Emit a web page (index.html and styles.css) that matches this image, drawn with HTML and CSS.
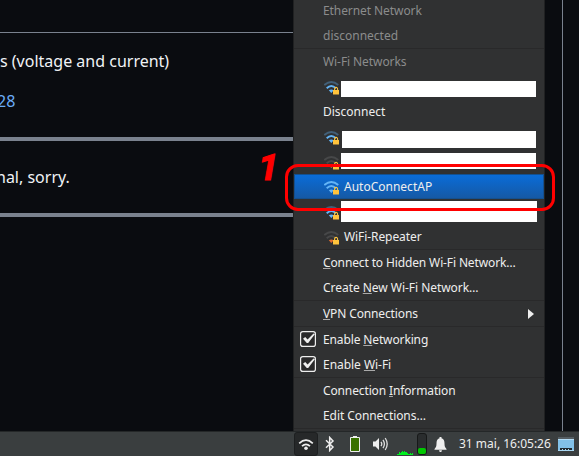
FILE: index.html
```html
<!DOCTYPE html>
<html lang="en">
<head>
<meta charset="utf-8">
<title>Network menu</title>
<link rel="stylesheet" href="styles.css">
</head>
<body>
<svg width="0" height="0" class="defs">
  <symbol id="waves" viewBox="0 0 16 14">
    <path class="w3" d="M.3 4Q7.300-2 14.300 4" fill="none" stroke-width="1.800"/>
    <path class="w2" d="M2.700 7.300Q7.300 2.900 11.900 7.300" fill="none" stroke-width="1.900"/>
    <path class="w1" d="M4.800 9.300Q7.300 7.500 9.800 9.300L7.300 12Z"/>
    <path d="M10.600 9V7.900a1.500 1.500 0 0 1 3 0V9" fill="none" stroke="#ffc33c" stroke-width="1.100"/>
    <path d="M9 9H15V13.500H9z" fill="#ffc33c"/>
  </symbol>
</svg>
<div class="screen">
  <main class="page">
    <section class="post">
      <p class="post-text">s (voltage and current)</p>
      <p class="post-text"><a class="link">28</a></p>
    </section>
    <section class="reply"><p class="post-text"><span class="cut">nal, sorry.</span></p></section>
    <section class="rest"></section>
  </main>
  <footer class="taskbar">
    <div class="tray-wifi">
      <svg width="16" height="14" viewBox="0 0 16 14" fill="none" stroke="#eee" stroke-width="1.7"><path d="M1.200 6.300Q8 0 14.800 6.300M4 9.200Q8 5.400 12 9.200"/><circle cx="8" cy="11.300" r="1.800" fill="#eee" stroke="none"/></svg>
    </div>
    <svg class="tray-bt" width="10" height="16" viewBox="0 0 10 16" fill="none" stroke="#eee" stroke-width="1.5"><path d="M1 4.3L8 11 4.7 14.5V1.5L8 5 1 11.7"/></svg>
    <svg class="tray-bat" width="10" height="16" viewBox="0 0 10 16"><path d="M3 0h4v2H3z" fill="#eee"/><path d="M.5 1.5h9v14h-9z" fill="#397100" stroke="#eee"/></svg>
    <svg class="tray-vol" width="17" height="14" viewBox="0 0 17 14"><path d="M1 4.500h2.500L7 1v12L3.500 9.500H1z" fill="#eee"/><path d="M9 4.800Q10.500 7 9 9.200M11 2.800Q13.800 7 11 11.200M13.200 1Q17.200 7 13.200 13" fill="none" stroke="#ddd" stroke-width="1.300"/></svg>
    <svg class="tray-graph" width="16" height="4" viewBox="0 0 16 4"><path d="M0 4V3h2V1h1v1h1V1h1V0h1v1h1V0h1v1h2v1h1v1h2V2h1v1h1V2h1v2z" fill="#00f020"/></svg>
    <div class="tray-meter"><span class="meter-fill"></span></div>
    <svg class="tray-bell" width="13" height="15" viewBox="0 0 13 15" fill="#eee"><path d="M5.500 0h2v1.200C10 2 10.500 4 10.500 6.500 10.500 9.500 11 10 12.500 12v.8H.5V12C2 10 2.500 9.500 2.500 6.500 2.500 4 3 2 5.500 1.200zM5 13.300h3L7.300 15H5.700z"/></svg>
    <time class="clock">31 mai, 16:05:26</time>
    <svg class="tray-desk" width="16" height="14" viewBox="0 0 16 14"><path d="M0 0h16v2H0z" fill="#555d62"/><path d="M0 2h16v12H0z" fill="#82c1e8"/><path d="M0 2h16v1H0z" fill="#b3dcf5"/><path d="M2 11h12v2H2z" fill="#20292e"/><path d="M4 12h1v1H4zM7 12h1v1H7zM10 12h1v1h-1z" fill="#b3dcf5"/><path d="M0 13h16v1H0z" fill="#a9d7f2"/></svg>
  </footer>

  <nav class="menu">
    <div class="item muted tight">Ethernet Network</div>
    <div class="item muted">disconnected</div>
    <div class="sep"></div>
    <div class="item muted tight">Wi-Fi Networks</div>
    <div class="item"><svg class="wifi mid"><use href="#waves"/></svg><span class="redact r1"></span></div>
    <div class="item">Disconnect</div>
    <div class="item"><svg class="wifi mid"><use href="#waves"/></svg><span class="redact r2"></span></div>
    <div class="item"><svg class="wifi weak"><use href="#waves"/></svg><span class="redact r3"></span></div>
    <div class="item active"><svg class="wifi full"><use href="#waves"/></svg><span class="name">AutoConnectAP</span></div>
    <div class="item"><svg class="wifi mid"><use href="#waves"/></svg><span class="redact r4"></span></div>
    <div class="item"><svg class="wifi weak"><use href="#waves"/></svg><span class="name tight">WiFi-Repeater</span></div>
    <div class="sep"></div>
    <div class="item tighter"><span><u>C</u>onnect to Hidden Wi-Fi Network…</span></div>
    <div class="item slight"><span>Create <u>N</u>ew Wi-Fi Network…</span></div>
    <div class="sep"></div>
    <div class="item tighter"><span><u>V</u>PN Connections</span><svg class="arrow" width="6" height="10" viewBox="0 0 6 10"><path d="M0 0L6 5 0 10z" fill="#eee"/></svg></div>
    <div class="sep"></div>
    <div class="item checkable tighter"><svg class="check" viewBox="0 0 16 16"><rect x=".6" y=".6" width="14.800" height="14.800" rx="2.200" fill="#29292a" stroke="#eee" stroke-width="1.200"/><path d="M3 7.800L5.200 6 7.600 8.400 13.500 2.600 15 3 8.200 12H6.800z" fill="#eee"/></svg><span>Enable <u>N</u>etworking</span></div>
    <div class="item checkable slight"><svg class="check" viewBox="0 0 16 16"><rect x=".6" y=".6" width="14.800" height="14.800" rx="2.200" fill="#29292a" stroke="#eee" stroke-width="1.200"/><path d="M3 7.800L5.200 6 7.600 8.400 13.500 2.600 15 3 8.200 12H6.800z" fill="#eee"/></svg><span>Enable <u>W</u>i-Fi</span></div>
    <div class="sep"></div>
    <div class="item tighter"><span>Connection <u>I</u>nformation</span></div>
    <div class="item tight"><span>Edit Connections…</span></div>
    <div class="sep"></div>
  </nav>
  <div class="callout"></div>
  <div class="callout-number">1</div>
</div>
</body>
</html>
```
FILE: styles.css
```css
* { box-sizing: border-box; }
body { margin: 0; font-family: "Noto Sans", sans-serif; }
.defs { position: absolute; }
.screen { position: relative; width: 579px; height: 456px; overflow: hidden; display: flex; flex-direction: column; background: #0a0c10; }
.page { width: 563px; flex: 1; border-right: 1px solid #7a828e; display: flex; flex-direction: column; padding-top: 32px; color: #f0f3f6; font-size: 16px; line-height: 24px; }
.post { width: 530px; height: 109px; border-top: 1px solid #7a828e; border-bottom: 4px solid #7a828e; padding-top: 16px; }
.post-text { margin: 0 0 16px; white-space: nowrap; }
.link { color: #6aadf8; margin-left: -3px; }
.cut { margin-left: -4px; }
.reply { width: 530px; height: 76px; border-bottom: 4px solid #7a828e; padding-top: 24px; }
.taskbar { height: 25px; border-top: 1px solid #242728; background: #3a3e3f; display: flex; align-items: center; color: #eee; }
.tray-wifi { margin-left: 294px; width: 24px; height: 24px; display: flex; align-items: center; justify-content: center; background: #262829; border: 1px solid #1d1f20; border-radius: 3px; }
.tray-bt { margin-left: 7px; }
.tray-bat { margin-left: 15px; }
.tray-vol { margin-left: 12px; }
.tray-graph { margin-left: 8px; align-self: flex-end; margin-bottom: 1px; }
.tray-meter { margin-left: 4px; width: 10px; height: 22px; border: 1px solid #171919; border-radius: 3px; background: #2a2d2e; display: flex; align-items: flex-end; }
.meter-fill { width: 8px; height: 6px; border-radius: 2px; background: #00c800; }
.tray-bell { margin-left: 7px; }
.clock { margin-left: 12px; width: 92px; font-size: 12px; line-height: 24px; white-space: nowrap; }
.tray-desk { margin-left: 7px; }

.menu { position: absolute; left: 293px; top: -2px; width: 252px; height: 433px; background: #303132; border: solid #202122; border-width: 0 1px; color: #eee; font-size: 12px; }
.item { height: 25px; display: flex; align-items: center; padding-left: 29px; white-space: nowrap; line-height: 25px; }
.muted { color: #8b8c8c; }
.slight { letter-spacing: -.04px; }
.tight { letter-spacing: -.08px; }
.tighter { letter-spacing: -.13px; }
.sep { height: 1px; background: #29292a; }
.active { background: linear-gradient(#0a6cd8, #1559a5); border: 1px solid #14508f; padding-left: 28px; }
.wifi { width: 16px; height: 14px; flex: none; margin: 2px 0 0 1px; }
.name { margin-left: 4px; }
.mid { --outer: #426078; --middle: #64b5f6; --inner: #64b5f6; }
.weak { --outer: #474849; --middle: #474849; --inner: #e06b2d; }
.full { --outer: #64b5f6; --middle: #64b5f6; --inner: #64b5f6; }
.w3 { stroke: var(--outer); }
.w2 { stroke: var(--middle); }
.w1 { fill: var(--inner); }
.redact { background: #fff; width: 195px; align-self: flex-start; margin-left: 1px; }
.r1 { height: 16px; margin-top: 7px; }
.r2 { height: 17px; margin-top: 7px; margin-left: 2px; width: 194px; }
.r3 { height: 16px; margin-top: 4px; }
.r4 { height: 21px; margin-top: 2px; width: 196px; }
u { text-decoration: underline; text-decoration-color: #aaa; text-decoration-thickness: 1px; text-underline-offset: 1px; }
.arrow { margin-left: auto; margin-right: 10px; }
.checkable { padding-left: 6px; }
.check { width: 16px; height: 16px; margin: -1px 7px 0 0; }

.callout { position: absolute; left: 285px; top: 164px; width: 270px; height: 47px; border: 3px solid #f00; border-radius: 13px; }
.callout-number { position: absolute; left: 258px; top: 150px; color: #f00; font-family: Roboto, sans-serif; font-size: 37px; line-height: 36px; font-weight: 700; font-style: italic; -webkit-text-stroke: 1px #f00; }
```
